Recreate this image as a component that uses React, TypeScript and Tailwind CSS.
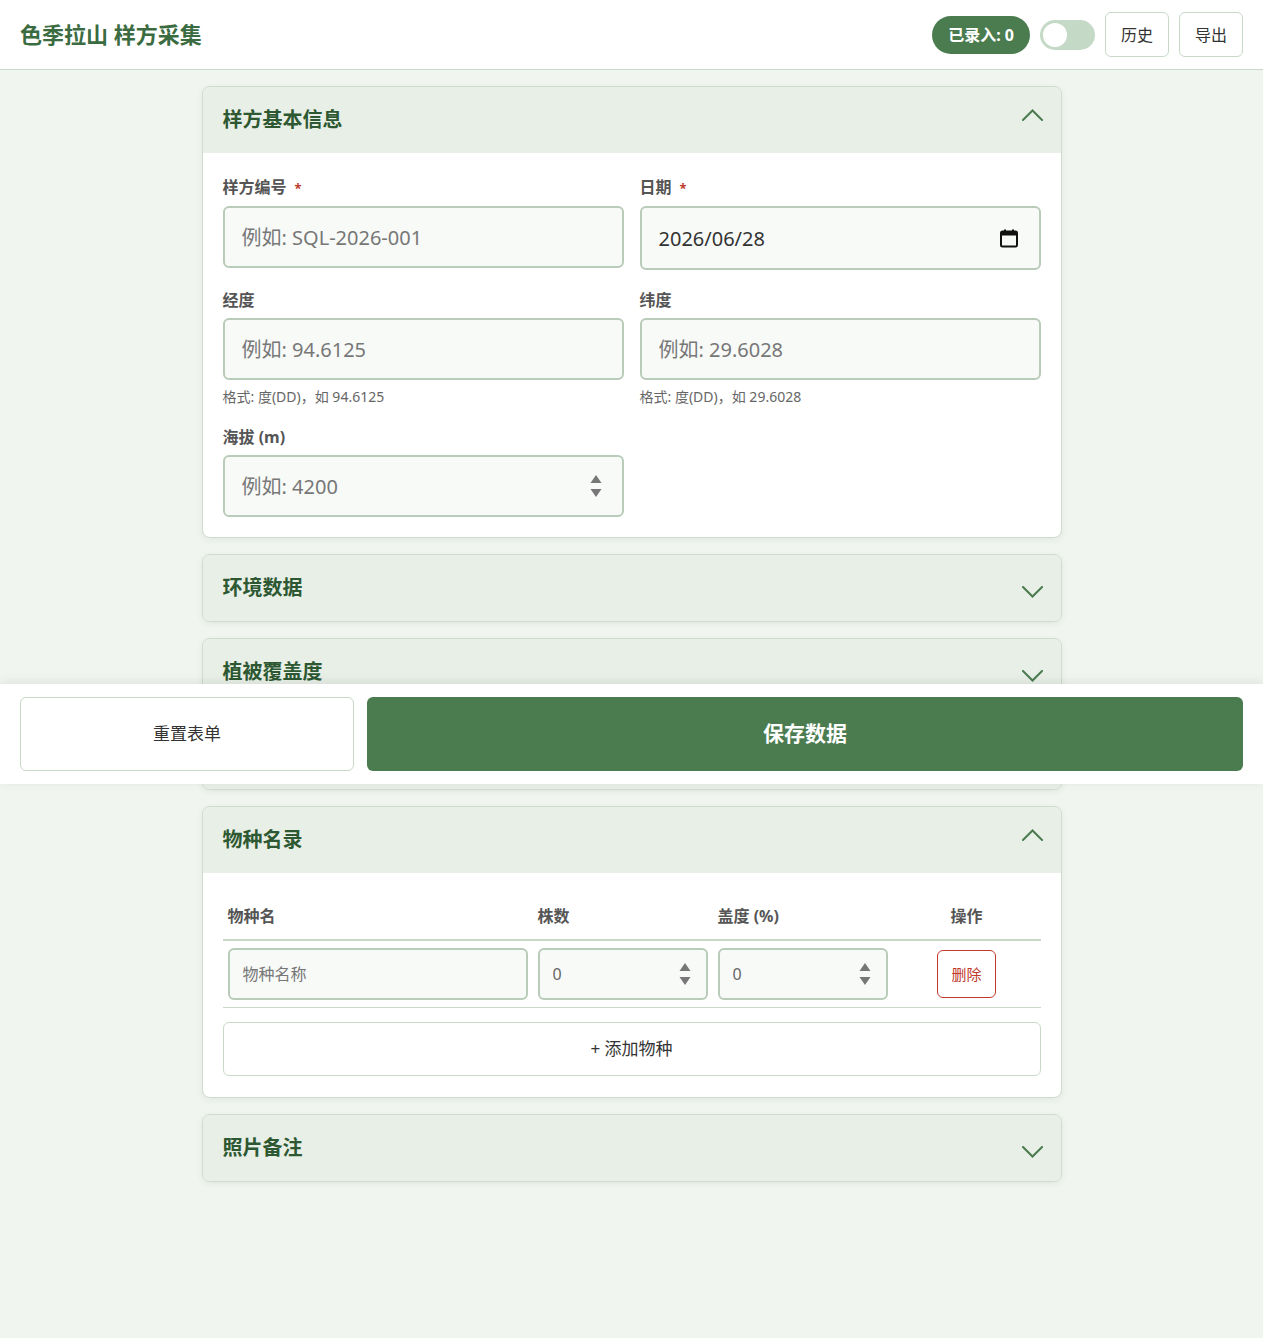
import React from "react";

const font = { fontFamily: '"Noto Sans", "Noto Sans CJK SC", sans-serif' };

const Chevron = ({ up }: { up?: boolean }) => (
  <svg
    width="21"
    height="12"
    viewBox="0 0 21 12"
    fill="none"
    className={up ? "shrink-0 -translate-y-[5px]" : "shrink-0 translate-y-[4px]"}
  >
    <path
      d={up ? "M1 11 L10.5 1.5 L20 11" : "M1 1 L10.5 10.5 L20 1"}
      stroke="#4a7c50"
      strokeWidth="2"
      strokeLinecap="square"
    />
  </svg>
);

// up/down arrows shown on the numeric fields
const Spinner = () => (
  <svg width="12" height="24" viewBox="0 0 12 24" fill="#777">
    <path d="M6 1 L11.5 9 H0.5 Z" />
    <path d="M6 23 L11.5 15 H0.5 Z" />
  </svg>
);

const SectionHead = ({ title, open }: { title: string; open?: boolean }) => (
  <div className="flex h-[66px] items-center justify-between bg-[#e8efe7] pl-5 pr-[18px]">
    <h2 className="text-[20px] font-bold text-[#2d5832]">{title}</h2>
    <Chevron up={open} />
  </div>
);

const Section = ({ title, open, children }: { title: string; open?: boolean; children?: React.ReactNode }) => (
  <section className="overflow-hidden rounded-lg border border-[#cddccd] bg-white shadow-[0_2px_6px_rgba(60,90,60,0.08)]">
    <SectionHead title={title} open={open} />
    {children}
  </section>
);

const Label = ({ text, required }: { text: string; required?: boolean }) => (
  <label className="mb-[8px] block text-[16px] font-bold leading-5 text-[#555]">
    {text}
    {required && <span className="ml-2 text-[13px] text-[#c0392b]">*</span>}
  </label>
);

const inputCls =
  "h-[62px] w-full rounded-md border-2 border-[#b9cbb9] bg-[#f8faf7] px-[17px] text-[20px] text-[#333] placeholder:text-[#777] outline-none";

const CalendarIcon = () => (
  <svg width="20" height="20" viewBox="0 0 20 20" fill="none">
    <rect x="2" y="3.5" width="16" height="15" rx="1.5" stroke="#111" strokeWidth="2" />
    <rect x="2" y="3.5" width="16" height="4" fill="#111" />
    <path d="M6 1.5v3M14 1.5v3" stroke="#111" strokeWidth="2" />
  </svg>
);

const smallInput =
  "h-[52px] w-full rounded-md border-2 border-[#b9cbb9] bg-[#f8faf7] px-[13px] text-[16px] text-[#666] placeholder:text-[#777] outline-none";

const NumberCell = () => (
  <td className="px-[5px] py-[7px]">
    <div className="relative">
      <input className={smallInput} defaultValue="0" inputMode="numeric" />
      <span className="absolute right-[17px] top-[14px]">
        <Spinner />
      </span>
    </div>
  </td>
);

export default function App() {
  return (
    <div className="min-h-[1338px] bg-[#f0f5ef]" style={font}>
      <header className="flex h-[70px] items-center justify-between border-b border-[#c8d9c8] bg-white pl-5 pr-5">
        <h1 className="text-[22px] font-bold text-[#3b6b41]">色季拉山 样方采集</h1>
        <div className="flex items-center gap-[10px]">
          <span className="flex h-[38px] items-center rounded-full bg-[#4a7c50] px-4 text-[16px] font-bold text-white">
            已录入: 0
          </span>
          <span className="flex h-[30px] w-[55px] items-center rounded-full bg-[#c5d9c7] px-[3px]">
            <span className="h-6 w-6 rounded-full bg-white" />
          </span>
          <button className="h-[45px] w-16 rounded-md border border-[#c8d9c8] bg-white text-[16px] text-[#333]">历史</button>
          <button className="h-[45px] w-16 rounded-md border border-[#c8d9c8] bg-white text-[16px] text-[#333]">导出</button>
        </div>
      </header>

      <main className="mx-auto flex max-w-[860px] flex-col gap-4 pt-4 pb-10">
        <Section title="样方基本信息" open>
          <div className="grid grid-cols-2 gap-x-4 px-5 pt-[24px] pb-[20px]">
            <div className="mb-[22px]">
              <Label text="样方编号" required />
              <input className={inputCls} placeholder="例如: SQL-2026-001" />
            </div>
            <div className="mb-[20px]">
              <Label text="日期" required />
              <div className="relative">
                <input className={`${inputCls} h-[64px]`} defaultValue="2026/06/28" readOnly />
                <span className="absolute right-[22px] top-[22px]">
                  <CalendarIcon />
                </span>
              </div>
            </div>
            <div className="mb-5">
              <Label text="经度" />
              <input className={inputCls} placeholder="例如: 94.6125" />
              <p className="mt-[6px] text-[14px] text-[#666]">格式: 度(DD)，如 94.6125</p>
            </div>
            <div className="mb-5">
              <Label text="纬度" />
              <input className={inputCls} placeholder="例如: 29.6028" />
              <p className="mt-[6px] text-[14px] text-[#666]">格式: 度(DD)，如 29.6028</p>
            </div>
            <div>
              <Label text="海拔 (m)" />
              <div className="relative">
                <input className={inputCls} placeholder="例如: 4200" inputMode="numeric" />
                <span className="absolute right-[22px] top-[19px]">
                  <Spinner />
                </span>
              </div>
            </div>
          </div>
        </Section>

        <Section title="环境数据" />
        <Section title="植被覆盖度" />
        <Section title="土壤信息" />

        <Section title="物种名录" open>
          <div className="px-5 pt-5 pb-[21px]">
            <table className="w-full border-collapse">
              <thead>
                <tr className="border-b-2 border-[#c8d9c8] text-left text-[16px] font-bold text-[#555]">
                  <th className="w-[310px] px-[5px] pt-[11px] pb-[11px] font-bold">物种名</th>
                  <th className="w-[180px] px-[5px] pt-[11px] pb-[11px] font-bold">株数</th>
                  <th className="w-[180px] px-[5px] pt-[11px] pb-[11px] font-bold">盖度 (%)</th>
                  <th className="px-[5px] pt-[11px] pb-[11px] text-center font-bold">操作</th>
                </tr>
              </thead>
              <tbody>
                <tr className="border-b border-[#c8d9c8]">
                  <td className="px-[5px] py-[7px]">
                    <input className={smallInput} placeholder="物种名称" />
                  </td>
                  <NumberCell />
                  <NumberCell />
                  <td className="px-[5px] py-[7px] text-center">
                    <button className="h-12 w-[59px] rounded-md border border-[#c0392b] bg-white text-[15px] text-[#c0392b]">
                      删除
                    </button>
                  </td>
                </tr>
              </tbody>
            </table>
            <button className="mt-[14px] h-[54px] w-full rounded-md border border-[#c8d9c8] bg-white text-[17px] text-[#333]">
              + 添加物种
            </button>
          </div>
        </Section>

        <Section title="照片备注" />
      </main>

      <div className="fixed top-[684px] left-0 right-0 flex gap-[13px] bg-white px-5 py-[13px] shadow-[0_-2px_10px_rgba(0,0,0,0.08)]">
        <button className="h-[74px] w-[334px] rounded-md border border-[#c8d9c8] bg-white text-[17px] text-[#333]">
          重置表单
        </button>
        <button className="h-[74px] flex-1 rounded-md bg-[#4a7c50] text-[21px] font-bold text-white">保存数据</button>
      </div>
    </div>
  );
}
